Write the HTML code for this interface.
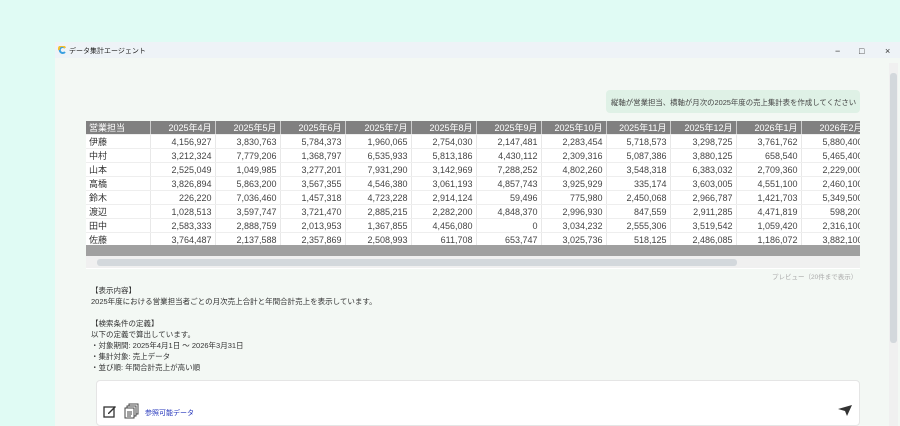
<!DOCTYPE html>
<html><head><meta charset="utf-8"><style>
*{margin:0;padding:0;box-sizing:border-box}
body{width:900px;height:426px;background:#e0fbf4;position:relative;overflow:hidden;font-family:"Liberation Sans","Noto Sans CJK JP",sans-serif;}
.win{position:absolute;left:55px;top:42px;width:845px;height:384px;background:#f3f8f4;}
.title{position:absolute;left:0;top:0;width:845px;height:16px;background:#eef3f7;font-size:7px;color:#222;}
.title span{position:absolute;left:14px;top:4px}
.ctl{position:absolute;top:1px;font-size:9px;color:#333}
.bubble{position:absolute;left:551px;top:48px;width:254px;height:23px;background:#dff1e6;border-radius:4px;font-size:7.4px;color:#444;padding:7px 0 0 5px;white-space:nowrap}
.tbl{position:absolute;left:31px;top:79px;width:774px;height:148px;overflow:hidden;background:#fff}
table{border-collapse:collapse;font-size:9px;color:#444;table-layout:fixed;width:780px}
td,th{height:14px;border-right:1px solid #e8e8e8;border-bottom:1px solid #eee;text-align:right;padding:0 3px;white-space:nowrap;overflow:hidden}
th{background:#808080;color:#fff;font-weight:normal;height:13px;border-right:1px solid #ccc}
td:first-child,th:first-child{text-align:left;color:#333}
th:first-child{color:#fff}
.gbar{position:absolute;left:31px;top:203px;width:774px;height:11px;background:#a0a0a0}
.hs{position:absolute;left:31px;top:214px;width:774px;height:12px;background:#f0f0f0}
.hs i{position:absolute;left:11px;top:3px;width:640px;height:7px;background:#d3d8dc;border-radius:3px}
.note{position:absolute;left:717px;top:229px;font-size:6.5px;color:#aaa}
.txt{position:absolute;left:36px;top:243px;font-size:7.5px;line-height:11px;color:#333}
.input{position:absolute;left:41px;top:338px;width:764px;height:46px;background:#fff;border:1px solid #e5e5e5;border-radius:4px}
.vs{position:absolute;left:834px;top:21px;width:9px;height:363px;background:#f0f0f0}
.vs i{position:absolute;left:1px;top:10px;width:7px;height:270px;background:#d3d8dc;border-radius:3px}
</style></head><body>
<div class="win">
<div class="title">
<svg style="position:absolute;left:3px;top:4px" width="8" height="8" viewBox="0 0 8 8"><path d="M7 2A3 3 0 1 0 7 6" stroke="#3aa0e0" stroke-width="2" fill="none"/><path d="M7 2A3 3 0 0 0 1 4" stroke="#f5c030" stroke-width="2" fill="none"/></svg>
<span>データ集計エージェント</span>
<span class="ctl" style="left:780px">−</span><span class="ctl" style="left:804px">□</span><span class="ctl" style="left:830px">×</span>
</div>
<div class="bubble">縦軸が営業担当、横軸が月次の2025年度の売上集計表を作成してください</div>
<div class="tbl"><table>
<colgroup><col style="width:64px"><col style="width:65px"><col style="width:65px"><col style="width:65px"><col style="width:66px"><col style="width:65px"><col style="width:65px"><col style="width:65px"><col style="width:64px"><col style="width:66px"><col style="width:65px"><col style="width:65px"></colgroup>
<tr><th>営業担当</th><th>2025年4月</th><th>2025年5月</th><th>2025年6月</th><th>2025年7月</th><th>2025年8月</th><th>2025年9月</th><th>2025年10月</th><th>2025年11月</th><th>2025年12月</th><th>2026年1月</th><th>2026年2月</th></tr>
<tr><td>伊藤</td><td>4,156,927</td><td>3,830,763</td><td>5,784,373</td><td>1,960,065</td><td>2,754,030</td><td>2,147,481</td><td>2,283,454</td><td>5,718,573</td><td>3,298,725</td><td>3,761,762</td><td>5,880,400</td></tr>
<tr><td>中村</td><td>3,212,324</td><td>7,779,206</td><td>1,368,797</td><td>6,535,933</td><td>5,813,186</td><td>4,430,112</td><td>2,309,316</td><td>5,087,386</td><td>3,880,125</td><td>658,540</td><td>5,465,400</td></tr>
<tr><td>山本</td><td>2,525,049</td><td>1,049,985</td><td>3,277,201</td><td>7,931,290</td><td>3,142,969</td><td>7,288,252</td><td>4,802,260</td><td>3,548,318</td><td>6,383,032</td><td>2,709,360</td><td>2,229,000</td></tr>
<tr><td>高橋</td><td>3,826,894</td><td>5,863,200</td><td>3,567,355</td><td>4,546,380</td><td>3,061,193</td><td>4,857,743</td><td>3,925,929</td><td>335,174</td><td>3,603,005</td><td>4,551,100</td><td>2,460,100</td></tr>
<tr><td>鈴木</td><td>226,220</td><td>7,036,460</td><td>1,457,318</td><td>4,723,228</td><td>2,914,124</td><td>59,496</td><td>775,980</td><td>2,450,068</td><td>2,966,787</td><td>1,421,703</td><td>5,349,500</td></tr>
<tr><td>渡辺</td><td>1,028,513</td><td>3,597,747</td><td>3,721,470</td><td>2,885,215</td><td>2,282,200</td><td>4,848,370</td><td>2,996,930</td><td>847,559</td><td>2,911,285</td><td>4,471,819</td><td>598,200</td></tr>
<tr><td>田中</td><td>2,583,333</td><td>2,888,759</td><td>2,013,953</td><td>1,367,855</td><td>4,456,080</td><td>0</td><td>3,034,232</td><td>2,555,306</td><td>3,519,542</td><td>1,059,420</td><td>2,316,100</td></tr>
<tr><td>佐藤</td><td>3,764,487</td><td>2,137,588</td><td>2,357,869</td><td>2,508,993</td><td>611,708</td><td>653,747</td><td>3,025,736</td><td>518,125</td><td>2,486,085</td><td>1,186,072</td><td>3,882,100</td></tr>
</table></div>
<div class="gbar"></div>
<div class="hs"><i></i></div>
<div class="note">プレビュー（20件まで表示）</div>
<div class="txt">【表示内容】<br>2025年度における営業担当者ごとの月次売上合計と年間合計売上を表示しています。<br><br>【検索条件の定義】<br>以下の定義で算出しています。<br>・対象期間: 2025年4月1日 ～ 2026年3月31日<br>・集計対象: 売上データ<br>・並び順: 年間合計売上が高い順</div>
<div class="input">
<svg style="position:absolute;left:6px;top:23px" width="14" height="14" viewBox="0 0 14 14"><rect x="1" y="3" width="10" height="10" fill="none" stroke="#333" stroke-width="1.3"/><path d="M5 9L12 2l1 1-7 7H5z" fill="#333"/></svg>
<svg style="position:absolute;left:27px;top:22px" width="16" height="16" viewBox="0 0 16 16"><rect x="5" y="1" width="9" height="10" fill="#fff" stroke="#444"/><rect x="3" y="3" width="9" height="10" fill="#fff" stroke="#444"/><rect x="1" y="5" width="9" height="10" fill="#fff" stroke="#444"/><path d="M3 9h5M3 11h5M3 13h4" stroke="#444"/></svg>
<span style="position:absolute;left:48px;top:27px;font-size:7px;color:#2233bb">参照可能データ</span>
<svg style="position:absolute;left:740px;top:23px" width="16" height="13" viewBox="0 0 16 13"><path d="M1 5L15 1 10 12 8 7z" fill="#333"/></svg>
</div>
<div class="vs"><i></i></div>
</div>
</body></html>
